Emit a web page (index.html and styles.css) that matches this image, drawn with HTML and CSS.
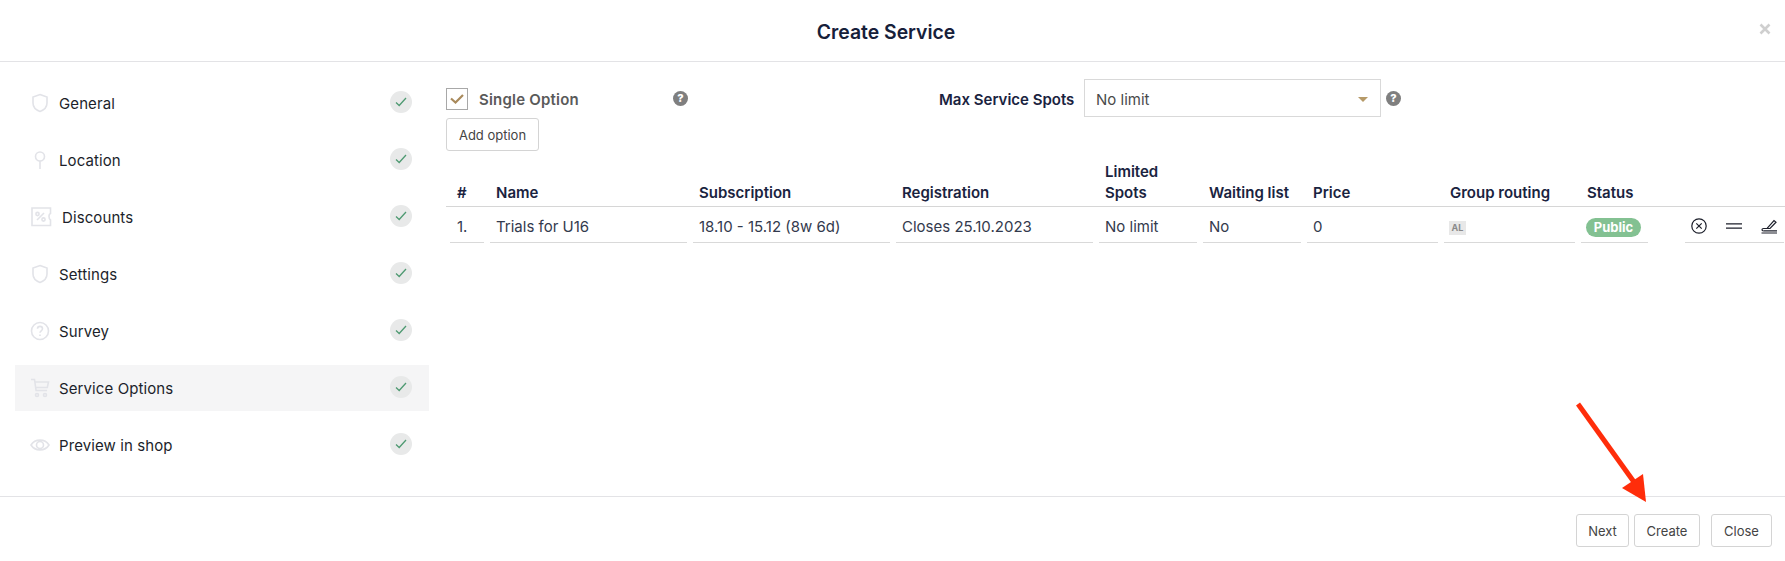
FILE: index.html
```html
<!DOCTYPE html>
<html lang="en">
<head>
<meta charset="utf-8">
<title>Create Service</title>
<link rel="stylesheet" href="styles.css">
</head>
<body>
<div class="modal">
  <header class="head">
    <h1 class="title">Create Service</h1>
    <svg class="close-x" viewBox="0 0 12 12"><path d="M1.5 1.5l9 9M10.5 1.5l-9 9"/></svg>
  </header>
  <div class="body">
    <nav class="side">
      <div class="item">
        <svg class="ico" viewBox="0 0 20 20"><path d="M10 1.500l7 2.600v6c0 4-3 7-7 8.400-4-1.400-7-4.400-7-8.400v-6z"/></svg>
        <span class="item-label">General</span>
        <span class="ok"><svg viewBox="0 0 12 10"><path d="M1 5.500l3.200 3L11 1"/></svg></span>
      </div>
      <div class="item">
        <svg class="ico" viewBox="0 0 20 20"><circle cx="10" cy="6.500" r="4.500"/><path d="M10 11v8"/></svg>
        <span class="item-label">Location</span>
        <span class="ok"><svg viewBox="0 0 12 10"><path d="M1 5.500l3.200 3L11 1"/></svg></span>
      </div>
      <div class="item">
        <svg class="ico ico-wide" viewBox="0 0 22 20"><path d="M2 1h18.500v5.500c-2 .5-2 5.500 0 6.500v5.500H2z"/><path d="M7 13l7-7"/><circle cx="7.500" cy="7" r="1.600"/><circle cx="13.500" cy="12.500" r="1.600"/></svg>
        <span class="item-label">Discounts</span>
        <span class="ok"><svg viewBox="0 0 12 10"><path d="M1 5.500l3.200 3L11 1"/></svg></span>
      </div>
      <div class="item">
        <svg class="ico" viewBox="0 0 20 20"><path d="M10 1.500l7 2.600v6c0 4-3 7-7 8.400-4-1.400-7-4.400-7-8.400v-6z"/></svg>
        <span class="item-label">Settings</span>
        <span class="ok"><svg viewBox="0 0 12 10"><path d="M1 5.500l3.200 3L11 1"/></svg></span>
      </div>
      <div class="item">
        <svg class="ico" viewBox="0 0 20 20"><circle cx="10" cy="10" r="8.500"/><path d="M7.500 7.800c0-3.200 5-3.200 5 0 0 2-2.500 2-2.500 4"/><path d="M10 13.600v1.400"/></svg>
        <span class="item-label">Survey</span>
        <span class="ok"><svg viewBox="0 0 12 10"><path d="M1 5.500l3.200 3L11 1"/></svg></span>
      </div>
      <div class="item active">
        <svg class="ico" viewBox="0 0 20 20"><path d="M1 1.500h3.500l1.600 11h11M5 4h13.500l-1.200 5.500H5.800"/><circle cx="7" cy="17" r="1.500"/><circle cx="15" cy="17" r="1.500"/></svg>
        <span class="item-label">Service Options</span>
        <span class="ok"><svg viewBox="0 0 12 10"><path d="M1 5.500l3.200 3L11 1"/></svg></span>
      </div>
      <div class="item">
        <svg class="ico" viewBox="0 0 20 20"><path d="M1 10c4-6.500 14-6.500 18 0-4 6.500-14 6.500-18 0z"/><circle cx="10" cy="10" r="3.500"/></svg>
        <span class="item-label">Preview in shop</span>
        <span class="ok"><svg viewBox="0 0 12 10"><path d="M1 5.500l3.200 3L11 1"/></svg></span>
      </div>
    </nav>
    <main class="main">
      <div class="top">
        <div class="single">
          <span class="check"><svg viewBox="0 0 14 12"><path d="M1 5.500l4.500 4L13 2"/></svg></span>
          <span class="single-label">Single Option</span>
        </div>
        <span class="help">?</span>
        <span class="max-label">Max Service Spots</span>
        <div class="select"><span>No limit</span><i class="caret"></i></div>
        <span class="help help-end">?</span>
      </div>
      <button class="btn add">Add option</button>
      <div class="thead grid">
        <div>#</div><div>Name</div><div>Subscription</div><div>Registration</div><div>Limited<br>Spots</div><div>Waiting list</div><div>Price</div><div>Group routing</div><div>Status</div><div></div>
      </div>
      <div class="trow grid">
        <div class="cell">1.</div>
        <div class="cell">Trials for U16</div>
        <div class="cell">18.10 - 15.12 (8w 6d)</div>
        <div class="cell">Closes 25.10.2023</div>
        <div class="cell">No limit</div>
        <div class="cell">No</div>
        <div class="cell">0</div>
        <div class="cell"><span class="tag">AL</span></div>
        <div class="cell"><span class="pill">Public</span></div>
        <div class="cell actions">
          <svg viewBox="0 0 16 16"><circle cx="8" cy="8" r="7.200"/><path d="M5.300 5.300l5.400 5.400M10.700 5.300l-5.400 5.400"/></svg>
          <svg viewBox="0 0 16 16"><path d="M0 5.800h16M0 10.200h16"/></svg>
          <svg viewBox="0 0 16 16"><path d="M6.500 9.800L13 2.500l2 1.700-6 6.300H6.500z"/><path d="M8 10.500H2.500c-2 0-2 2.400 0 2.400"/><path d="M0.500 15H16M2.500 12.900H16"/></svg>
        </div>
      </div>
    </main>
  </div>
  <footer class="foot">
    <button class="btn">Next</button>
    <button class="btn">Create</button>
    <button class="btn btn-close">Close</button>
  </footer>
  <svg class="arrow" viewBox="0 0 90 120"><path d="M2 4L58 82" class="shaft"/><path d="M46 88L67 74l3 28z" class="head-tip"/></svg>
</div>
</body>
</html>
```
FILE: styles.css
```css
* { box-sizing: border-box; }
html, body { margin: 0; height: 100%; background: #fff; }
body { font-family: Inter, "Liberation Sans", sans-serif; color: #1c1f2b; font-size: 15px; overflow: hidden; }
.modal { position: relative; width: 1785px; height: 561px; display: flex; flex-direction: column; }

.head { height: 62px; border-bottom: 1px solid #e3e3e6; display: flex; align-items: center; flex: none; padding: 0 14px 0 0; }
.title { flex: 1; margin: 0; text-align: center; font-size: 19.4px; line-height: 26px; font-weight: 600; color: #16203a; transform: translateX(6.500px); position: relative; top: 1px; }
.close-x { width: 12px; height: 12px; fill: none; stroke: #cfcfcf; stroke-width: 2.600; position: relative; top: -2px; }

.body { height: 434px; display: flex; flex: none; }
.side { width: 446px; padding: 18px 17px 0 15px; display: flex; flex-direction: column; gap: 11px; flex: none; }
.item { height: 46px; display: flex; align-items: center; padding: 0 15px; }
.item.active { background: #f5f5f6; }
.ico { width: 20px; height: 20px; margin-right: 9px; fill: none; stroke: #e2e3e8; stroke-width: 1.600; flex: none; }
.ico-wide { width: 22px; margin-right: 10px; }
.item-label { flex: 1; font-size: 15px; color: #1c1f2b; letter-spacing: .1px; }
.ok { width: 22px; height: 22px; border-radius: 50%; background: #e8e9e9; display: flex; align-items: center; justify-content: center; flex: none; margin-right: 2px; position: relative; top: -1px; }
.ok svg { width: 12px; height: 10px; fill: none; stroke: #4f9a72; stroke-width: 1.300; }

.main { flex: 1; padding-top: 17px; min-width: 0; }
.top { display: flex; align-items: center; height: 38px; }
.single { width: 228px; display: flex; align-items: center; gap: 10px; margin-top: 2px; }
.check { width: 22px; height: 22px; border: 1px solid #a8a8a8; display: flex; align-items: center; justify-content: center; }
.check svg { width: 14px; height: 12px; fill: none; stroke: #a98a5c; stroke-width: 2.200; }
.single-label { font-size: 15px; font-weight: 600; color: #5a5a5a; letter-spacing: .2px; padding-left: 1px; }
.help { width: 15px; height: 15px; border-radius: 50%; background: #7f7f7f; color: #fff; font-size: 11px; font-weight: 800; line-height: 15px; text-align: center; flex: none; margin-left: -1px; }
.help-end { margin-left: 5px; }
.max-label { margin-left: 251px; width: 145px; font-size: 15px; font-weight: 600; color: #1a2340; padding-top: 2px; }
.select { width: 297px; height: 38px; border: 1px solid #d9d9d9; padding: 2px 12px 0 11px; display: flex; align-items: center; justify-content: space-between; color: #4a4a4a; font-size: 15px; }
.caret { width: 0; height: 0; border-left: 5px solid transparent; border-right: 5px solid transparent; border-top: 5px solid #b69a68; }

.btn { font-family: inherit; font-size: 13px; color: #444; background: #fff; border: 1px solid #d4d4d4; border-radius: 3px; height: 33px; padding: 0 11px; cursor: pointer; }
.add { display: block; margin-top: 1px; width: 93px; padding: 0; }

.grid { display: grid; grid-template-columns: 34px 197px 197px 197px 98px 98px 131px 131px 67px 99px; column-gap: 6px; padding-left: 4px; }
.grid > div:last-child { margin-left: 31px; }
.thead { margin-top: 9px; border-bottom: 1px solid #d6d6d6; height: 47px; align-items: end; font-size: 15px; line-height: 21px; font-weight: 600; color: #1a2340; padding-bottom: 3px; }
.thead > div { padding-left: 6px; white-space: nowrap; }
.thead > div:first-child { padding-left: 7px; }
.trow { height: 36px; }
.cell { padding: 3px 0 0 6px; height: 36px; border-bottom: 1px solid #d9d9d9; display: flex; align-items: center; font-size: 15px; color: #333a4d; white-space: nowrap; }
.cell:first-child { padding-left: 7px; }
.tag { background: #e8e8e8; color: #8a8a8a; font-size: 9px; font-weight: 700; width: 17px; height: 14px; line-height: 14px; text-align: center; margin: 3px 0 0 -1px; }
.pill { background: #83c192; color: #fff; font-size: 13px; font-weight: 700; height: 19px; line-height: 19px; border-radius: 10px; width: 55px; text-align: center; margin: 3px 0 0 -1px; }
.actions { width: 99px; padding-left: 6px; gap: 19px; }
.actions svg { width: 16px; height: 16px; fill: none; stroke: #1c1f2b; stroke-width: 1.200; flex: none; }

.foot { border-top: 1px solid #e3e3e6; flex: 1; display: flex; justify-content: flex-end; align-items: flex-start; gap: 5px; padding: 17px 13px 0 0; }
.foot .btn { padding: 0; }
.foot .btn:first-child { width: 53px; }
.foot .btn:nth-child(2) { width: 66px; }
.foot .btn-close { margin-left: 6px; width: 61px; }

.arrow { position: absolute; left: 1576px; top: 400px; width: 90px; height: 120px; }
.shaft { fill: none; stroke: #ff2d0a; stroke-width: 5; }
.head-tip { fill: #ff2d0a; }
```
